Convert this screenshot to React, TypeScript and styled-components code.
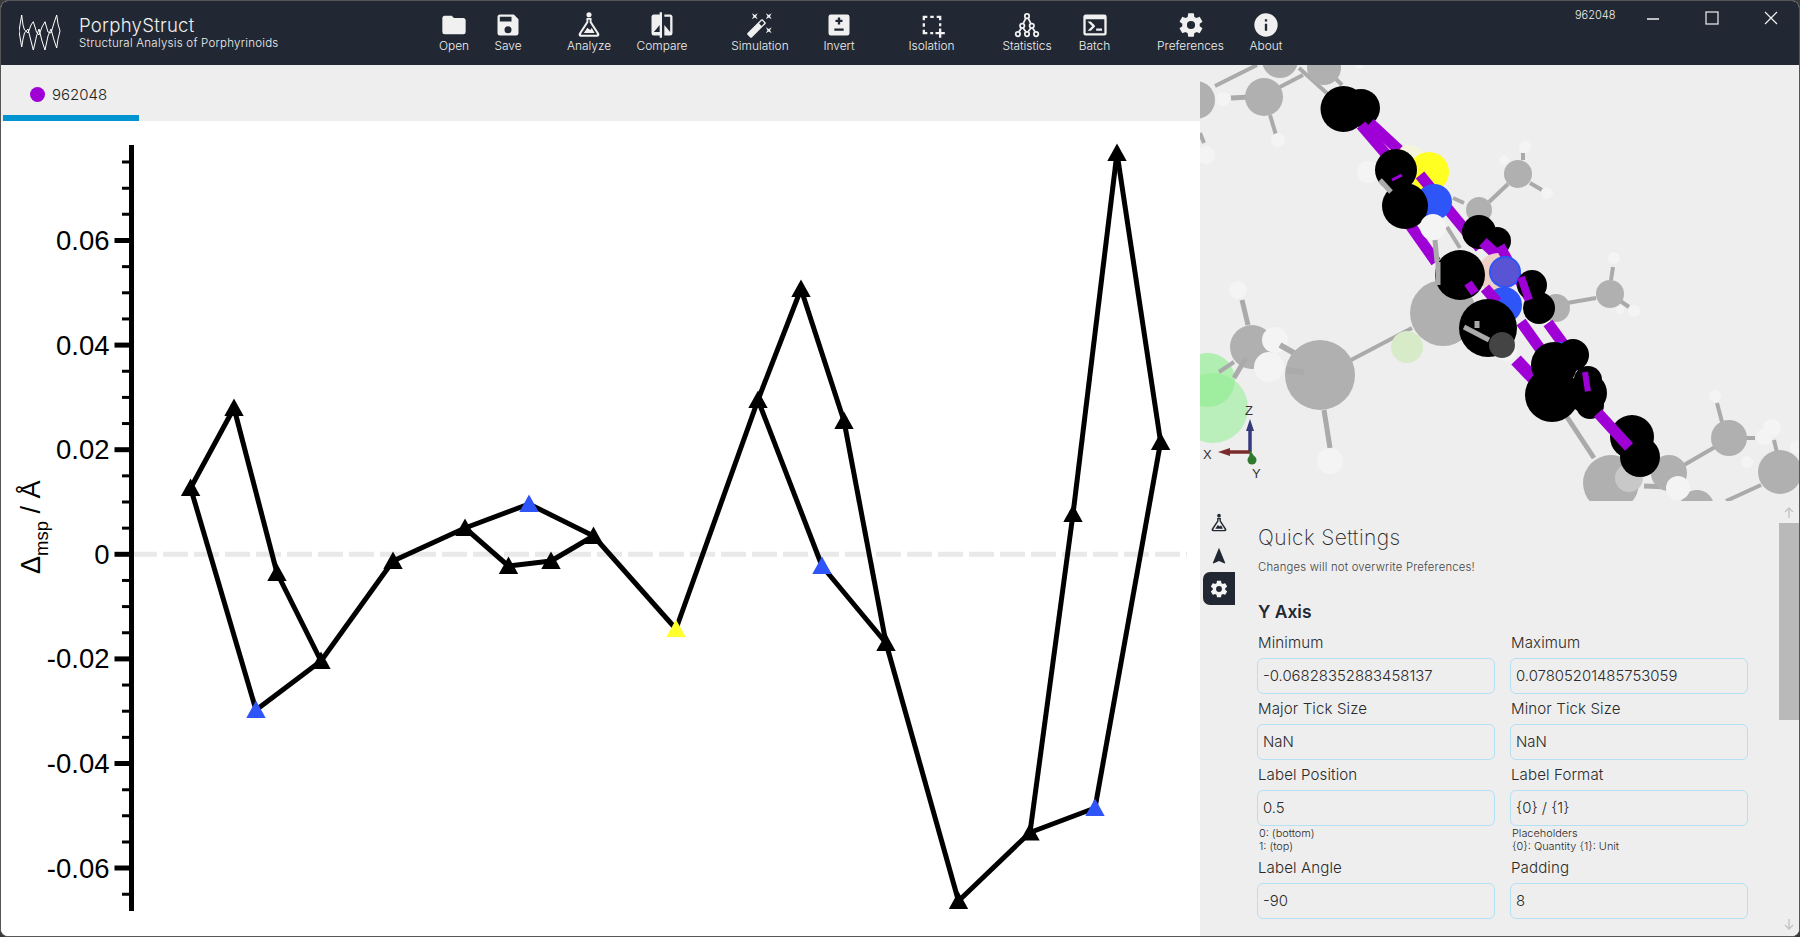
import React from "react";
import styled, { createGlobalStyle } from "styled-components";

const UI = `Inter, "Open Sans", "Liberation Sans", sans-serif`;

const Global = createGlobalStyle`
  html, body { margin: 0; padding: 0; height: 100%; background: #3a3a3a; overflow: hidden; }
  * { box-sizing: border-box; }
  #root { width: 1800px; height: 937px; }
`;

const Win = styled.div`
  width: 1800px; height: 937px; border: 1px solid #555; border-radius: 8px;
  overflow: hidden; display: flex; flex-direction: column; background: #eee;
  font-family: ${UI}; color: #212833;
`;
const Header = styled.header`
  height: 64px; flex: none; background: #212833; color: #f0f0f0;
  display: flex; align-items: flex-start; position: relative;
`;
const Brand = styled.div`
  width: 426px; flex: none; height: 64px; display: flex; align-items: center; padding-left: 18px;
`;
const LogoBox = styled.svg`width: 44px; height: 40px; flex: none; margin-right: 16px;`;
const BrandText = styled.div`display: flex; flex-direction: column; margin-top: -2px;`;
const BrandTitle = styled.div`font-size: 18.6px; font-weight: 300; line-height: 23px; letter-spacing: .25px;`;
const BrandSub = styled.div`font-size: 11.5px; font-weight: 300; line-height: 13px; letter-spacing: .25px;`;
const Tools = styled.nav`display: flex; height: 64px;`;
const Tool = styled.div<{ $w: number; $ml?: number }>`
  width: ${p => p.$w}px; margin-left: ${p => p.$ml ?? 0}px; height: 64px; display: flex; flex-direction: column; align-items: center;
  padding-top: 10px; font-size: 11.9px; font-weight: 300; white-space: nowrap; line-height: 14px;
  svg { width: 28px; height: 28px; margin-bottom: 0; fill: #f0f0f0; display: block; }
`;
const WinControls = styled.div`
  margin-left: auto; display: flex; align-items: flex-start; height: 32px; padding-right: 21px; padding-top: 7px;
`;
const WinId = styled.span`font-size: 11px; font-weight: 300; line-height: 14px; width: 71px;`;
const WinBtn = styled.svg<{ $gap?: number }>`
  width: 14px; height: 14px; margin-top: 3px; margin-left: ${p => p.$gap ?? 0}px; stroke: #f0f0f0; fill: none; stroke-width: 1.2;
`;
const Main = styled.main`flex: 1; display: flex; min-height: 0;`;
const Left = styled.section`width: 1199px; flex: none; display: flex; flex-direction: column; background: #fff;`;
const TabStrip = styled.div`height: 56px; flex: none; background: #eee; padding-left: 2px;`;
const Tab = styled.div`
  width: 136px; height: 56px; display: flex; align-items: center; padding: 9px 0 0 27px;
  border-bottom: 6px solid #0095d0; font-size: 15px; font-weight: 300; color: #222;
`;
const Dot = styled.span`width: 15px; height: 15px; border-radius: 50%; background: #9f00d6; margin-right: 7px;`;
const ChartSvg = styled.svg`display: block; width: 1199px; height: 815px;`;
const Right = styled.aside`width: 599px; flex: none; display: flex; flex-direction: column; background: #eee;`;
const ViewerSvg = styled.svg`display: block; width: 599px; height: 436px; flex: none;`;
const AxisLetter = styled.text`font-family: "Liberation Sans", sans-serif; font-size: 13px; fill: #333;`;
const Panel = styled.div`flex: 1; min-height: 0; display: flex;`;
const SideTabs = styled.div`width: 57px; flex: none; padding: 5px 0 0 3px; display: flex; flex-direction: column;`;
const SideTab = styled.div<{ $on?: boolean }>`
  width: 32px; height: 33px; display: flex; align-items: center; justify-content: center;
  border-radius: 7px 0 0 7px; background: ${p => (p.$on ? "#212833" : "transparent")};
  svg { width: 20px; height: 20px; fill: ${p => (p.$on ? "#f4f4f4" : "#212833")}; display: block; }
`;
const Content = styled.div`width: 521px; flex: none; height: 435px; overflow: hidden; padding-top: 25px;`;
const Heading = styled.h2`margin: 0 0 0 1px; font-size: 21px; font-weight: 200; line-height: 24px; color: #2a2a2a; letter-spacing: .4px;`;
const Sub = styled.p`margin: 10px 0 0 1px; font-size: 11.3px; font-weight: 300; line-height: 14px; color: #444; letter-spacing: .2px;`;
const Section = styled.h3`margin: 27px 0 0 1px; font-size: 17.4px; font-weight: 600; line-height: 22px; color: #212833;`;
const Grid = styled.div`
  margin-top: 11px; display: grid; grid-template-columns: 238px 238px; column-gap: 15px; row-gap: 6px;
`;
const Field = styled.div`display: flex; flex-direction: column;`;
const Label = styled.label`font-size: 15.1px; font-weight: 300; line-height: 18px; margin: 0 0 6px 1px; color: #2a2a2a; letter-spacing: .1px;`;
const Input = styled.input`
  width: 238px; height: 36px; border: 1px solid #b5e0f3; border-radius: 6px; background: #eee;
  padding: 0 5px; font: 300 14.9px ${UI}; color: #2a2a2a; outline: none;
`;
const Hint = styled.div`margin: 1px 0 0 2px; font-size: 10.9px; line-height: 13px; font-weight: 300; color: #2a2a2a;`;
const Scroll = styled.div`width: 20px; flex: none; margin-left: auto; display: flex; flex-direction: column; height: 435px; padding: 2px 0 2px;`;
const ScrollArrow = styled.svg`width: 20px; height: 20px; flex: none; stroke: #c4c4c4; fill: none; stroke-width: 1.4;`;
const Thumb = styled.div`height: 197px; background: #b9b9b9; flex: none;`;
const ScrollRest = styled.div`flex: 1;`;

const P = {
  folder: "M10,4H4C2.89,4 2,4.89 2,6V18A2,2 0 0,0 4,20H20A2,2 0 0,0 22,18V8C22,6.89 21.1,6 20,6H12L10,4Z",
  save: "M15,9H5V5H15M12,19A3,3 0 0,1 9,16A3,3 0 0,1 12,13A3,3 0 0,1 15,16A3,3 0 0,1 12,19M17,3H5C3.89,3 3,3.9 3,5V19A2,2 0 0,0 5,21H19A2,2 0 0,0 21,19V7L17,3Z",
  flask: "M12,1A2.2,2.2 0 1 1 12,5.4A2.2,2.2 0 1 1 12,1ZM9.8,6H14.2V9.2L20.6,19C21.4,20.4 20.6,22 19,22H5C3.4,22 2.6,20.4 3.4,19L9.8,9.2ZM11.4,7.6V9.8L5.2,19.4C5,19.9 5.2,20.4 5.8,20.4H18.2C18.8,20.4 19,19.9 18.8,19.4L12.6,9.8V7.6ZM7.6,18.9L10.6,14.4L13,16.2L14.4,14.6L16.8,18.9Z",
  compare: "M19,3H14V5H19V18L14,12V21H19A2,2 0 0,0 21,19V5C21,3.89 20.1,3 19,3M10,18H5L10,12M10,3H5C3.89,3 3,3.89 3,5V19A2,2 0 0,0 5,21H10V23H12V1H10V3Z",
  fix: "M7.5,5.6L5,7L6.4,4.5L5,2L7.5,3.4L10,2L8.6,4.5L10,7L7.5,5.6M19.5,15.4L22,14L20.6,16.5L22,19L19.5,17.6L17,19L18.4,16.5L17,14L19.5,15.4M22,2L20.6,4.5L22,7L19.5,5.6L17,7L18.4,4.5L17,2L19.5,3.4L22,2M13.34,12.78L15.78,10.34L13.66,8.22L11.22,10.66L13.34,12.78M14.37,7.29L16.71,9.63C17.1,10 17.1,10.65 16.71,11.04L5.04,22.71C4.65,23.1 4,23.1 3.63,22.71L1.29,20.37C0.9,20 0.9,19.35 1.29,18.96L12.96,7.29C13.35,6.9 14,6.9 14.37,7.29Z",
  plusminus: "M5,3H19A2,2 0 0 1 21,5V19A2,2 0 0 1 19,21H5A2,2 0 0 1 3,19V5A2,2 0 0 1 5,3ZM11,5.5V7.5H9V9.5H11V11.5H13V9.5H15V7.5H13V5.5ZM8,15V17H16V15Z",
  select: "M4,4H8V6H6V8H4ZM10.5,4H13.5V6H10.5ZM16,4H20V8H18V6H16ZM4,10.5H6V13.5H4ZM18,10.5H20V13H18ZM4,16H6V18H8V20H4ZM10.5,18H13V20H10.5ZM18,15H20V18H23V20H20V23H18V20H15V18H18Z",
  console: "M20,19V7H4V19H20M20,3A2,2 0 0,1 22,5V19A2,2 0 0,1 20,21H4A2,2 0 0,1 2,19V5C2,3.89 2.9,3 4,3H20M13,17V15H18V17H13M9.58,13L5.57,9H8.4L11.7,12.3C12.09,12.69 12.09,13.33 11.7,13.72L8.42,17H5.59L9.58,13Z",
  cog: "M12,15.5A3.5,3.5 0 0,1 8.5,12A3.5,3.5 0 0,1 12,8.5A3.5,3.5 0 0,1 15.5,12A3.5,3.5 0 0,1 12,15.5M19.43,12.97C19.47,12.65 19.5,12.33 19.5,12C19.5,11.67 19.47,11.34 19.43,11L21.54,9.37C21.73,9.22 21.78,8.95 21.66,8.73L19.66,5.27C19.54,5.05 19.27,4.96 19.05,5.05L16.56,6.05C16.04,5.66 15.5,5.32 14.87,5.07L14.5,2.42C14.46,2.18 14.25,2 14,2H10C9.75,2 9.54,2.18 9.5,2.42L9.13,5.07C8.5,5.32 7.96,5.66 7.44,6.05L4.95,5.05C4.73,4.96 4.46,5.05 4.34,5.27L2.34,8.73C2.21,8.95 2.27,9.22 2.46,9.37L4.57,11C4.53,11.34 4.5,11.67 4.5,12C4.5,12.33 4.53,12.65 4.57,12.97L2.46,14.63C2.27,14.78 2.21,15.05 2.34,15.27L4.34,18.73C4.46,18.95 4.73,19.03 4.95,18.95L7.44,17.94C7.96,18.34 8.5,18.68 9.13,18.93L9.5,21.58C9.54,21.82 9.75,22 10,22H14C14.25,22 14.46,21.82 14.5,21.58L14.87,18.93C15.5,18.67 16.04,18.34 16.56,17.94L19.05,18.95C19.27,19.03 19.54,18.95 19.66,18.73L21.66,15.27C21.78,15.05 21.73,14.78 21.54,14.63L19.43,12.97Z",
  info: "M13,9H11V7H13M13,17H11V11H13M12,2A10,10 0 0,0 2,12A10,10 0 0,0 12,22A10,10 0 0,0 22,12A10,10 0 0,0 12,2Z",
  nav: "M12,2L4.5,20.29L5.21,21L12,18L18.79,21L19.5,20.29L12,2Z",
};

const GraphIcon = () => (
  <svg viewBox="0 0 24 24">
    <g fill="none" stroke="#f0f0f0" strokeWidth="1.5">
      <path d="M11,6.2L8.6,11M13,6.2L15.4,11M7.2,14.5L5,18M8.6,14.5L11.2,18M15.4,14.5L12.8,18M16.8,14.5L19,18" />
      <circle cx="12" cy="4.4" r="1.9" />
      <circle cx="7.9" cy="12.7" r="1.9" />
      <circle cx="16.1" cy="12.7" r="1.9" />
      <circle cx="4.2" cy="19.8" r="1.9" />
      <circle cx="12" cy="19.8" r="1.9" />
      <circle cx="19.8" cy="19.8" r="1.9" />
    </g>
  </svg>
);

const Icon = ({ d }: { d: string }) => (
  <svg viewBox="0 0 24 24"><path d={d} fillRule="evenodd" /></svg>
);

const tools: { label: string; w: number; ml?: number; icon: React.ReactNode }[] = [
  { label: "Open", w: 54, icon: <Icon d={P.folder} /> },
  { label: "Save", w: 54, icon: <Icon d={P.save} /> },
  { label: "Analyze", w: 60, ml: 24, icon: <Icon d={P.flask} /> },
  { label: "Compare", w: 86, icon: <Icon d={P.compare} /> },
  { label: "Simulation", w: 110, icon: <Icon d={P.fix} /> },
  { label: "Invert", w: 48, icon: <Icon d={P.plusminus} /> },
  { label: "Isolation", w: 137, icon: <Icon d={P.select} /> },
  { label: "Statistics", w: 54, icon: <GraphIcon /> },
  { label: "Batch", w: 81, icon: <Icon d={P.console} /> },
  { label: "Preferences", w: 111, icon: <Icon d={P.cog} /> },
  { label: "About", w: 40, icon: <Icon d={P.info} /> },
];

// ---- Chart data, in page pixels ----
type Pt = [number, number, string?];
const BLUE = "#2f55f8";
const pts: Record<string, Pt> = {
  A: [190.6, 488], B: [234, 408], C: [277, 573], D: [321, 661], E: [256, 710, BLUE],
  F: [393, 561], G: [465, 528], H: [529, 504, BLUE], I: [593.5, 536], J: [508.5, 566], K: [551, 561],
  L: [676, 629, "#ffff2e"], M: [758, 400], N: [801, 289], O: [844, 421], P: [886, 643], Q: [822, 566, BLUE],
  R: [958.5, 901], S: [1030, 832.5], T: [1073, 514], U: [1117, 153], V: [1160.6, 442], W: [1095, 808, BLUE],
};
const bonds = "AB BC CD DE EA DF FG GH HI GJ JK KI IL LM MN NO OP PQ QM PR RS ST TU UV VW WS".split(" ");
const ZERO = 554.3;
const STEP = 26.15;
const ticks: number[] = [];
for (let k = -15; k <= 14; k++) ticks.push(k);
const tickLabel: Record<number, string> = { [-12]: "0.06", [-8]: "0.04", [-4]: "0.02", 0: "0", 4: "-0.02", 8: "-0.04", 12: "-0.06" };

const Chart = () => (
  <ChartSvg viewBox="1 121 1199 815">
    <line x1="132" x2="1187" y1={ZERO} y2={ZERO} stroke="#e9e9e9" strokeWidth="5" strokeDasharray="25 6" />
    <rect x="129" y="145" width="5" height="766" fill="#000" />
    {ticks.map(k => {
      const y = ZERO + k * STEP;
      if (y < 150 || y > 905) return null;
      const major = k % 4 === 0;
      return <line key={k} x1={major ? 114.5 : 122} x2="130" y1={y} y2={y} stroke="#000" strokeWidth={major ? 5 : 3} />;
    })}
    {Object.entries(tickLabel).map(([k, t]) => (
      <text key={k} x="109.5" y={ZERO + Number(k) * STEP + 9.5} textAnchor="end" fontFamily='"Liberation Sans", sans-serif' fontSize="27.5" fill="#000">{t}</text>
    ))}
    <text transform="translate(40,574) rotate(-90)" fontFamily='"Liberation Sans", sans-serif' fontSize="27" fill="#000">
      Δ<tspan fontSize="18.5" dy="8">msp</tspan><tspan dy="-8"> / Å</tspan>
    </text>
    {bonds.map(b => {
      const p = pts[b[0]], q = pts[b[1]];
      return <line key={b} x1={p[0]} y1={p[1]} x2={q[0]} y2={q[1]} stroke="#000" strokeWidth="5" />;
    })}
    {Object.entries(pts).map(([k, [x, y, c]]) => (
      <polygon key={k} points={`${x},${y - 9.5} ${x + 9.7},${y + 8} ${x - 9.7},${y + 8}`} fill={c ?? "#000"} />
    ))}
  </ChartSvg>
);

// ---- Molecule drawing, in page pixels ----
const G = "#b0b0b0", H = "#f4f4f4", K = "#000", V = "#9f00d6", B = "#2d55f8", BD = "#aaaaaa";
type S = { a: [number, number, number]; c: string; o?: number } | { b: [number, number, number, number]; w: number; c: string };
const gb = (x1: number, y1: number, x2: number, y2: number, w = 4): S => ({ b: [x1, y1, x2, y2], w, c: BD });
const pb = (x1: number, y1: number, x2: number, y2: number, w = 11): S => ({ b: [x1, y1, x2, y2], w, c: V });
const at = (x: number, y: number, r: number, c: string, o?: number): S => ({ a: [x, y, r], c, o });

const scene: S[] = [
  gb(1215, 86, 1257, 65), gb(1231, 98, 1250, 97, 5), gb(1270, 115, 1276, 135), gb(1278, 88, 1303, 75), gb(1299, 68, 1330, 96), gb(1332, 75, 1342, 85),
  gb(1200, 133, 1204, 143),
  at(1196, 100, 19, G), at(1264, 97, 19, G), at(1280, 60, 18, G), at(1324, 68, 17, G),
  at(1223, 99, 7, H), at(1278, 140, 7, H), at(1206, 155, 9, H), at(1359, 65, 4, H),
  gb(1489, 202, 1508, 184), gb(1523, 160, 1523, 153), gb(1530, 183, 1542, 190), gb(1453, 198, 1464, 203), gb(1447, 227, 1460, 248),
  at(1518, 174, 14, G), at(1525, 147, 6, H), at(1504, 160, 5, H), at(1547, 193, 6, H), at(1479, 210, 13, G),
  gb(1412, 328, 1351, 360), gb(1324, 410, 1330, 448, 5), gb(1242, 300, 1248, 325, 5), gb(1567, 303, 1596, 298), gb(1613, 267, 1611, 280), gb(1619, 300, 1629, 307),
  gb(1684, 465, 1715, 447), gb(1726, 501, 1761, 485), gb(1743, 438, 1755, 438), gb(1644, 486, 1669, 487, 5), gb(1717, 403, 1722, 422), gb(1774, 440, 1778, 457), gb(1652, 470, 1665, 482),
  at(1407, 347, 16, "#d8ebc8"),
  at(1443, 313, 33, G), at(1252, 347, 22, G), at(1238, 290, 9, H), at(1330, 461, 13, H),
  at(1610, 294, 14, G), at(1614, 258, 6, H), at(1620, 310, 4, H), at(1634, 311, 6, H), at(1556, 308, 14, G),
  at(1697, 507, 17, G), at(1669, 473, 18, G), at(1729, 438, 18, G), at(1715, 396, 6, H), at(1747, 462, 6, H), at(1764, 437, 8, H), at(1772, 428, 9, H), at(1797, 447, 7, H), at(1780, 472, 22, G),
  at(1208, 380, 27, "#90ee90", 0.65),
  gb(1246, 358, 1234, 378, 5), gb(1234, 362, 1219, 372),
  at(1213, 408, 35, "#90ee90", 0.55),
  at(1275, 340, 13, H), gb(1280, 345, 1294, 353, 6), at(1320, 375, 35, G), gb(1286, 370, 1304, 372, 6), at(1269, 367, 15, H),
  at(1611, 483, 28, G), at(1629, 478, 14, "#c8c8c8"), at(1678, 488, 12, H), gb(1567, 417, 1594, 458, 5),
  at(1343.5, 109, 23, K), at(1361, 108, 19, K),
  at(1409, 163, 18, "#f5f5dc"), at(1429, 172, 20, "#ffff22"), at(1368, 172, 11, H),
  pb(1361, 125, 1391, 160), pb(1370, 123, 1399, 150),
  pb(1420, 175, 1480, 248), pb(1410, 225, 1436, 262),
  at(1434, 202, 18, B), at(1396, 170, 21, K), at(1405, 206, 23, K),
  { b: [1380, 180, 1391, 192], w: 5, c: "#aaa" },
  pb(1392, 180, 1402, 175, 3),
  at(1433, 227, 13, H), gb(1435, 240, 1437, 262, 5),
  at(1479, 232, 17, K), at(1497, 241, 14, K), pb(1483, 242, 1502, 260),
  { a: [1498, 273, 20], c: "#eed0c6" },
  pb(1500, 246, 1530, 300, 10),
  at(1460, 275, 25, K), at(1505, 272, 16, B), at(1505, 272, 14, "#6055cc", 0.85),
  gb(1438, 262, 1438, 285, 5),
  at(1532, 285, 15, K), at(1539, 308, 16, K), pb(1521, 277, 1529, 300, 8),
  pb(1548, 323, 1564, 345, 11),
  at(1504, 305, 18, B), at(1506, 350, 11, H),
  pb(1468, 283, 1475, 293, 9), pb(1485, 288, 1497, 302, 11), pb(1521, 322, 1541, 350, 11),
  at(1488, 328, 29, K), { b: [1464, 327, 1489, 340], w: 5, c: "#aaa" }, { b: [1477, 321, 1477, 328], w: 5, c: "#aaa" }, at(1502, 345, 13, "#444"),
  pb(1516, 360, 1537, 382, 13),
  at(1562, 360, 18, B), at(1573, 355, 16, K), at(1554, 365, 23, K), at(1552, 395, 27, K), at(1587, 393, 20, K), at(1588, 380, 14, K),
  pb(1585, 372, 1588, 392, 6),
  at(1590, 405, 14, K),
  at(1632, 437, 22, K), at(1640, 457, 20, K),
  pb(1598, 413, 1629, 447, 11),
];

const Viewer = () => (
  <ViewerSvg viewBox="1200 65 599 436">
    {scene.map((s, i) =>
      "a" in s ? (
        <circle key={i} cx={s.a[0]} cy={s.a[1]} r={s.a[2]} fill={s.c} fillOpacity={s.o ?? 1} />
      ) : (
        <line key={i} x1={s.b[0]} y1={s.b[1]} x2={s.b[2]} y2={s.b[3]} stroke={s.c} strokeWidth={s.w} />
      )
    )}
    <line x1="1250" y1="452" x2="1250" y2="428" stroke="#343a7c" strokeWidth="3.5" />
    <polygon points="1250,419 1254,431 1246,431" fill="#343a7c" />
    <line x1="1250" y1="452" x2="1228" y2="452" stroke="#7b2b2b" strokeWidth="3.5" />
    <polygon points="1218,452 1230,448 1230,456" fill="#7b2b2b" />
    <circle cx="1252" cy="460" r="4.5" fill="#2f7a2f" />
    <polygon points="1250,450 1254,456 1249,458" fill="#2f7a2f" />
    <AxisLetter x="1245" y="415">Z</AxisLetter>
    <AxisLetter x="1203" y="459">X</AxisLetter>
    <AxisLetter x="1252" y="478">Y</AxisLetter>
  </ViewerSvg>
);

const fields: { label: string; value: string; hint?: string[] }[] = [
  { label: "Minimum", value: "-0.06828352883458137" },
  { label: "Maximum", value: "0.07805201485753059" },
  { label: "Major Tick Size", value: "NaN" },
  { label: "Minor Tick Size", value: "NaN" },
  { label: "Label Position", value: "0.5", hint: ["0: (bottom)", "1: (top)"] },
  { label: "Label Format", value: "{0} / {1}", hint: ["Placeholders", "{0}: Quantity {1}: Unit"] },
  { label: "Label Angle", value: "-90" },
  { label: "Padding", value: "8" },
];

const logoA = "0,16 1.5,7 2.7,0 4,10 5.5,15 9,18 12,10 14.3,6.7 16,12 17.5,17 20,20 23,12 26,6.7 27.5,12 29,17 32,18 35,8 37.7,0 39,9 41,16";
const logoB = "0,16 1.5,25 2.7,32 4,24 5.5,18 9,14 12,26 14.3,35 16,28 17.5,21 20,14 23,26 26,35 27.5,28 29,21 32,14 35,25 37.7,33 39,24 41,16";

export default function App() {
  return (
    <Win>
      <Global />
      <Header>
        <Brand>
          <LogoBox viewBox="0 0 44 36">
            <polyline points={logoA} fill="none" stroke="#fff" strokeWidth="1" />
            <polyline points={logoB} fill="none" stroke="#fff" strokeWidth="1" />
          </LogoBox>
          <BrandText>
            <BrandTitle>PorphyStruct</BrandTitle>
            <BrandSub>Structural Analysis of Porphyrinoids</BrandSub>
          </BrandText>
        </Brand>
        <Tools>
          {tools.map(t => (
            <Tool key={t.label} $w={t.w} $ml={t.ml}>
              {t.icon}
              {t.label}
            </Tool>
          ))}
        </Tools>
        <WinControls>
          <WinId>962048</WinId>
          <WinBtn viewBox="0 0 14 14"><line x1="1" x2="13" y1="8" y2="8" strokeWidth="1.6" /></WinBtn>
          <WinBtn viewBox="0 0 14 14" $gap={45}><rect x="1" y="1" width="12" height="12" /></WinBtn>
          <WinBtn viewBox="0 0 14 14" $gap={45}><path d="M1,1L13,13M13,1L1,13" /></WinBtn>
        </WinControls>
      </Header>
      <Main>
        <Left>
          <TabStrip>
            <Tab><Dot />962048</Tab>
          </TabStrip>
          <Chart />
        </Left>
        <Right>
          <Viewer />
          <Panel>
            <SideTabs>
              <SideTab><Icon d={P.flask} /></SideTab>
              <SideTab><Icon d={P.nav} /></SideTab>
              <SideTab $on><Icon d={P.cog} /></SideTab>
            </SideTabs>
            <Content>
              <Heading>Quick Settings</Heading>
              <Sub>Changes will not overwrite Preferences!</Sub>
              <Section>Y Axis</Section>
              <Grid>
                {fields.map(f => (
                  <Field key={f.label}>
                    <Label>{f.label}</Label>
                    <Input readOnly value={f.value} />
                    {f.hint && <Hint>{f.hint.map(h => <div key={h}>{h}</div>)}</Hint>}
                  </Field>
                ))}
              </Grid>
            </Content>
            <Scroll>
              <ScrollArrow viewBox="0 0 20 20"><path d="M10,15V5M6,9L10,5L14,9" /></ScrollArrow>
              <Thumb />
              <ScrollRest />
              <ScrollArrow viewBox="0 0 20 20"><path d="M10,5V15M6,11L10,15L14,11" /></ScrollArrow>
            </Scroll>
          </Panel>
        </Right>
      </Main>
    </Win>
  );
}
